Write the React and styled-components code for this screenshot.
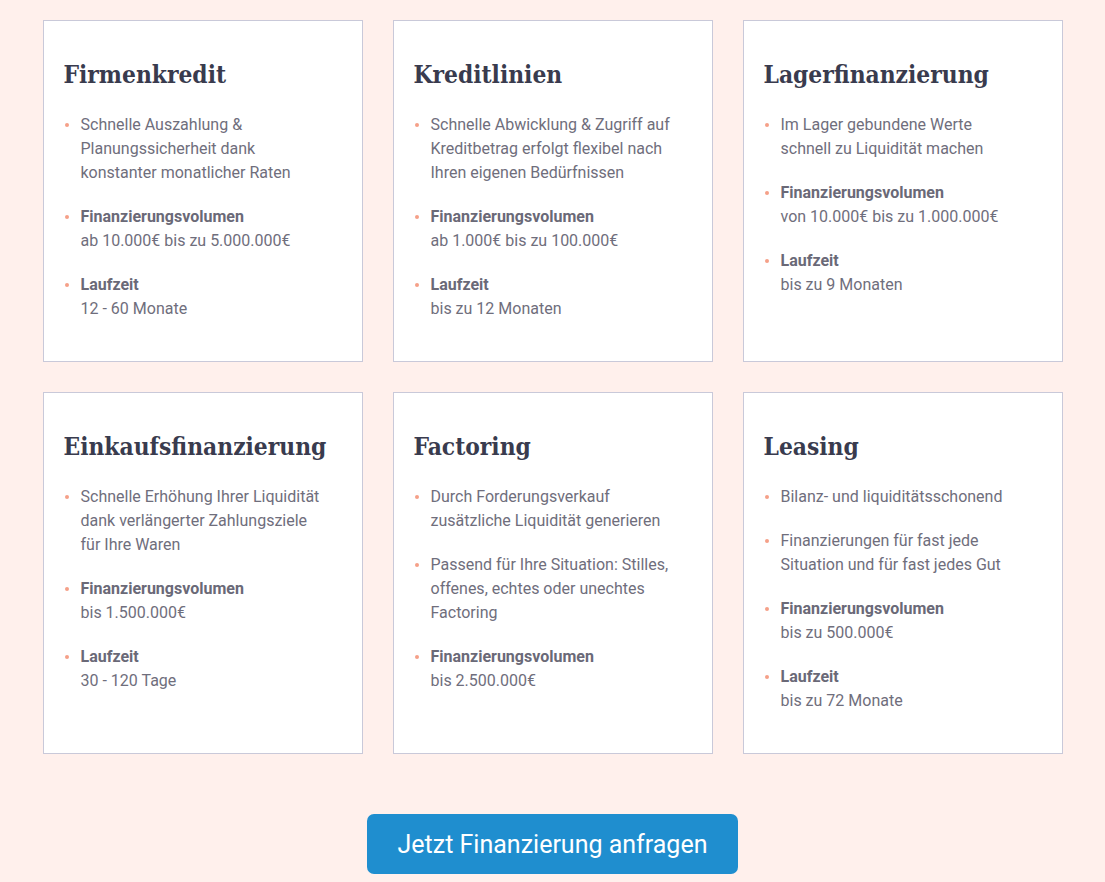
import React from "react";
import styled, { createGlobalStyle } from "styled-components";

const Global = createGlobalStyle`
  html, body { margin: 0; padding: 0; background: #fff0ec; }
  body { font-family: Roboto, "Liberation Sans", sans-serif; }
  * { box-sizing: border-box; }
`;

const Page = styled.div`
  width: 1020px;
  margin: 0 auto;
  padding-top: 20px;
  display: flex;
  flex-direction: column;
  align-items: center;
`;

const Grid = styled.div`
  display: grid;
  grid-template-columns: repeat(3, 320px);
  column-gap: 30px;
  row-gap: 30px;
  width: 100%;
`;

const Card = styled.div`
  background: #fff;
  border: 1px solid #c9c9d9;
  padding: 38px 20px 40px 20px;
`;

const Title = styled.h3`
  margin: 0 0 22px 0;
  font-family: "DejaVu Serif Condensed", "DejaVu Serif", serif;
  font-stretch: condensed;
  font-weight: bold;
  font-size: 24.3px;
  line-height: 32px;
  color: #393b4e;
`;

const List = styled.ul`
  list-style: none;
  margin: 0;
  padding: 0;
  display: flex;
  flex-direction: column;
  gap: 20px;
`;

const Item = styled.li`
  position: relative;
  max-width: 259px;
  padding-left: 17px;
  font-size: 16px;
  line-height: 24px;
  color: #6f6e7c;
  &::before {
    content: "";
    position: absolute;
    left: 1px;
    top: 10px;
    width: 4px;
    height: 4px;
    border-radius: 50%;
    background: #f5a088;
  }
`;

const Strong = styled.span`
  display: block;
  font-weight: bold;
  color: #6a6977;
`;

const Button = styled.button`
  margin-top: 60px;
  width: 371px;
  height: 60px;
  border: none;
  border-radius: 7px;
  background: #1f8ecf;
  color: #fff;
  font-family: Roboto, "Liberation Sans", sans-serif;
  font-size: 25px;
  cursor: pointer;
`;

const cards = [
  {
    title: "Firmenkredit",
    items: [
      { text: "Schnelle Auszahlung & Planungssicherheit dank konstanter monatlicher Raten" },
      { head: "Finanzierungsvolumen", text: "ab 10.000€ bis zu 5.000.000€" },
      { head: "Laufzeit", text: "12 - 60 Monate" },
    ],
  },
  {
    title: "Kreditlinien",
    items: [
      { text: "Schnelle Abwicklung & Zugriff auf Kreditbetrag erfolgt flexibel nach Ihren eigenen Bedürfnissen" },
      { head: "Finanzierungsvolumen", text: "ab 1.000€ bis zu 100.000€" },
      { head: "Laufzeit", text: "bis zu 12 Monaten" },
    ],
  },
  {
    title: "Lagerfinanzierung",
    items: [
      { text: "Im Lager gebundene Werte schnell zu Liquidität machen" },
      { head: "Finanzierungsvolumen", text: "von 10.000€ bis zu 1.000.000€" },
      { head: "Laufzeit", text: "bis zu 9 Monaten" },
    ],
  },
  {
    title: "Einkaufsfinanzierung",
    items: [
      { text: "Schnelle Erhöhung Ihrer Liquidität dank verlängerter Zahlungsziele für Ihre Waren" },
      { head: "Finanzierungsvolumen", text: "bis 1.500.000€" },
      { head: "Laufzeit", text: "30 - 120 Tage" },
    ],
  },
  {
    title: "Factoring",
    items: [
      { text: "Durch Forderungsverkauf zusätzliche Liquidität generieren" },
      { text: "Passend für Ihre Situation: Stilles, offenes, echtes oder unechtes Factoring" },
      { head: "Finanzierungsvolumen", text: "bis 2.500.000€" },
    ],
  },
  {
    title: "Leasing",
    items: [
      { text: "Bilanz- und liquiditätsschonend" },
      { text: "Finanzierungen für fast jede Situation und für fast jedes Gut" },
      { head: "Finanzierungsvolumen", text: "bis zu 500.000€" },
      { head: "Laufzeit", text: "bis zu 72 Monate" },
    ],
  },
];

export default function App() {
  return (
    <>
      <Global />
      <Page>
        <Grid>
          {cards.map((c) => (
            <Card key={c.title}>
              <Title>{c.title}</Title>
              <List>
                {c.items.map((it, i) => (
                  <Item key={i}>
                    {it.head && <Strong>{it.head}</Strong>}
                    {it.text}
                  </Item>
                ))}
              </List>
            </Card>
          ))}
        </Grid>
        <Button>Jetzt Finanzierung anfragen</Button>
      </Page>
    </>
  );
}
